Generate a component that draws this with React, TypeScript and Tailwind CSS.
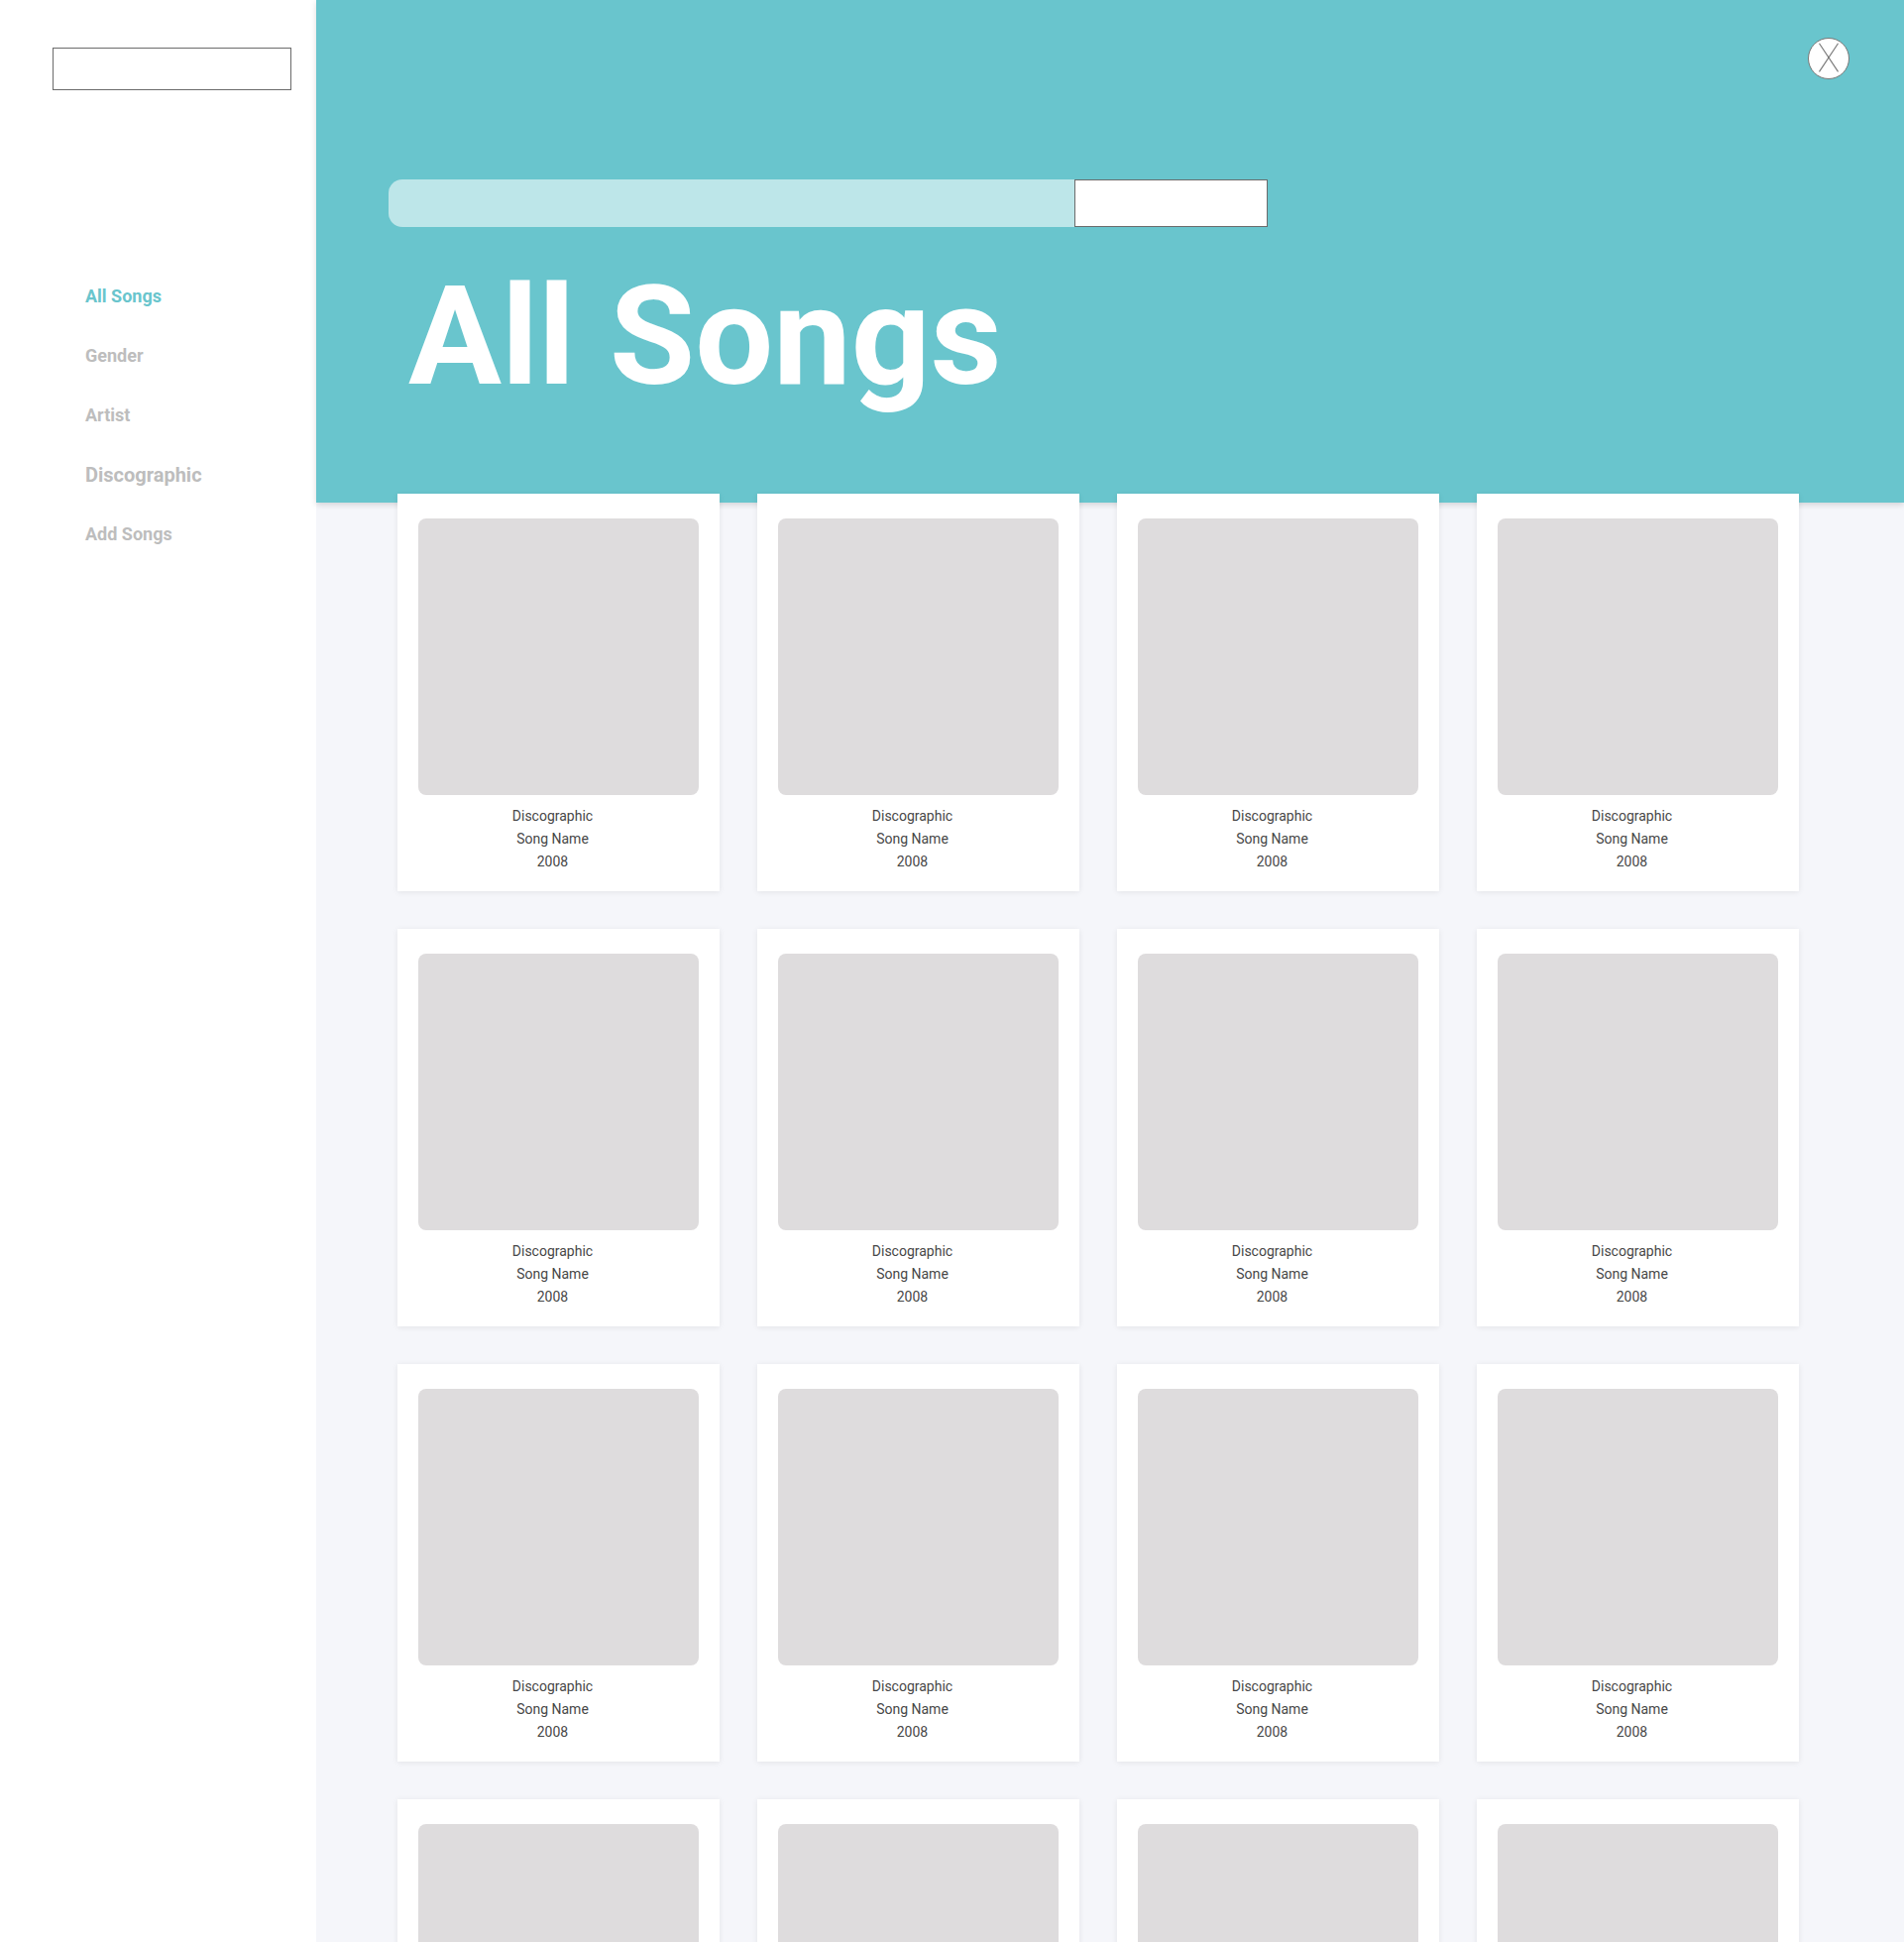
import React from "react";

const navItems = ["All Songs", "Gender", "Artist", "Discographic", "Add Songs"];

function Card() {
  return (
    <div className="bg-white w-[325px] h-[401px] pt-[25px] px-[21px] shadow-[0_1px_6px_rgba(0,0,0,0.08)]">
      <div className="w-[283px] h-[279px] rounded-[8px] bg-[#dedcdd]" />
      <div className="mt-[10px] pr-[12px] text-center text-[14px] leading-[23px] text-[#474747]">
        <div>Discographic</div>
        <div>Song Name</div>
        <div>2008</div>
      </div>
    </div>
  );
}

export default function App() {
  return (
    <div className="flex h-[1959px] overflow-hidden font-['Roboto',sans-serif]">
      <aside className="w-[319px] shrink-0 bg-white">
        <div className="ml-[53px] mt-[48px] w-[241px] h-[43px] border border-[#6b6b6b]" />
        <nav className="mt-[196px] pl-[86px] flex flex-col gap-[36px]">
          {navItems.map((item, i) => (
            <div
              key={item}
              className={`leading-[24px] font-bold ${
                item === "Discographic" ? "text-[20px]" : "text-[18px]"
              } ${i === 0 ? "text-[#69c5cd]" : "text-[#bdbdbd]"}`}
            >
              {item}
            </div>
          ))}
        </nav>
      </aside>
      <main className="flex-1 bg-[#f5f6fa] min-w-0">
        <header className="relative h-[507px] bg-[#69c5cd] shadow-[0_2px_6px_rgba(0,0,0,0.15)]">
          <button className="absolute right-[55px] top-[38px] w-[42px] h-[42px] rounded-full bg-white border border-[#777] flex items-center justify-center">
            <svg width="42" height="42" viewBox="0 0 42 42">
              <line x1="11" y1="5" x2="31" y2="35" stroke="#777" strokeWidth="1.2" />
              <line x1="31" y1="5" x2="11" y2="35" stroke="#777" strokeWidth="1.2" />
            </svg>
          </button>
          <div className="pt-[181px] pl-[73px] flex">
            <div className="w-[692px] h-[48px] rounded-l-[14px] bg-[#bde6e9]" />
            <div className="w-[195px] h-[48px] bg-white border border-[#6b6b6b]" />
          </div>
          <h1 className="mt-[40px] pl-[93px] text-[140px] leading-[140px] font-bold text-white">
            All Songs
          </h1>
        </header>
        <div className="relative z-10 -mt-[9px] pl-[82px] grid grid-cols-[repeat(4,325px)] gap-[38px]">
          {Array.from({ length: 16 }).map((_, i) => (
            <Card key={i} />
          ))}
        </div>
      </main>
    </div>
  );
}
